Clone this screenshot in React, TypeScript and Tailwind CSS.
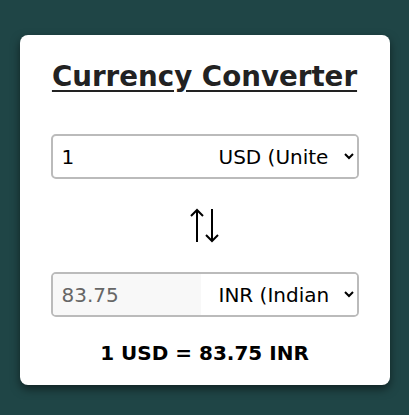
export default function App() {
  return (
    <div className="min-h-[415px] w-full bg-[#1f4546] pt-[35px] flex justify-center font-['DejaVu_Sans',sans-serif]">
      <div className="w-[370px] h-[350px] bg-white rounded-lg shadow-[0_4px_10px_rgba(0,0,0,0.5)] px-[31px] pt-[22px] flex flex-col items-center">
        <h1 className="text-[27.7px] font-bold underline text-[#222] leading-[40px] underline-offset-[4px] whitespace-nowrap">
          Currency Converter
        </h1>

        <div className="mt-[37px] w-full h-[45px] border-2 border-[#bbb] rounded-[5px] flex overflow-hidden">
          <input
            type="number"
            defaultValue="1"
            className="w-[148px] px-[9px] text-[20px] text-black outline-none"
          />
          <select className="flex-1 min-w-0 text-[20px] text-black outline-none bg-white pl-[14px] pr-[12px]">
            <option>USD (United States Dollar)</option>
          </select>
        </div>

        <div className="mt-[29px] h-[35px] flex items-center justify-center">
          <svg width="30" height="35" viewBox="0 0 30 35" fill="none" stroke="black" strokeWidth="2">
            <path d="M7 34V2M1 8l6-6 6 6" />
            <path d="M22 1v32M16 27l6 6 6-6" />
          </svg>
        </div>

        <div className="mt-[29px] w-full h-[45px] border-2 border-[#bbb] rounded-[5px] flex overflow-hidden">
          <input
            type="text"
            value="83.75"
            disabled
            className="w-[148px] px-[9px] text-[20px] text-[#666] bg-[#f8f8f8] outline-none"
          />
          <select className="flex-1 min-w-0 text-[20px] text-black outline-none bg-white pl-[14px] pr-[12px]">
            <option>INR (Indian Rupee)</option>
          </select>
        </div>

        <p className="mt-[22px] text-[20px] font-bold text-black leading-[28px]">1 USD = 83.75 INR</p>
      </div>
    </div>
  );
}
